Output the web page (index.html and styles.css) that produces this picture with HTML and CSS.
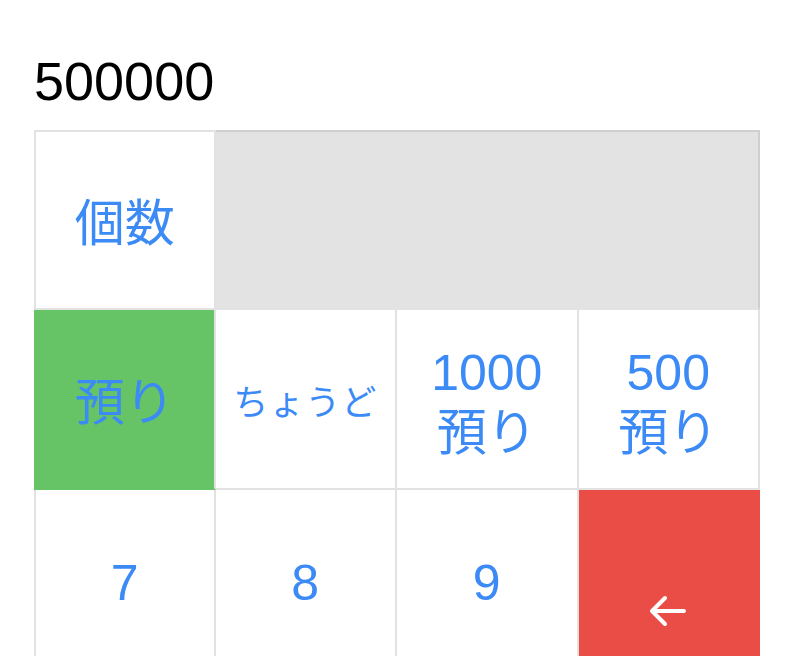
FILE: index.html
```html
<!DOCTYPE html>
<html lang="ja">
<head>
    <meta charset="UTF-8" />
    <meta name="viewport" content="width=device-width, initial-scale=1.0">
    <title>レジ</title>
    <link rel="stylesheet" href="styles.css">
</head>
<body>
<div class="register">
    <div class="amount">500000</div>
    <div class="keypad">
        <div class="key first-col first-row">個数</div>
        <div class="display first-row"></div>

        <div class="key first-col key-deposit">預り</div>
        <div class="key key-small">ちょうど</div>
        <div class="key">1000<br>預り</div>
        <div class="key">500<br>預り</div>

        <div class="key first-col">7</div>
        <div class="key">8</div>
        <div class="key">9</div>
        <div class="key key-back">
            <svg class="back-icon" width="38" height="32" viewBox="0 0 38 32">
                <path d="M35 16H4M16 3L3 16l13 13" fill="none" stroke="#fff" stroke-width="4" stroke-linecap="round" stroke-linejoin="round"/>
            </svg>
        </div>
    </div>
</div>
</body>
</html>
```

FILE: styles.css
```css
* {
    box-sizing: border-box;
    margin: 0;
    padding: 0;
}
html, body {
    background: #fff;
    overflow: hidden;
}
body {
    font-family: "Liberation Sans", "Noto Sans CJK JP", sans-serif;
}
.register {
    padding: 51px 44px 0 34px;
}
.amount {
    font-size: 54px;
    line-height: 60px;
    color: #000;
    margin-bottom: 19px;
}
.keypad {
    display: grid;
    grid-template-columns: repeat(4, 1fr);
    grid-auto-rows: 180px;
}
.keypad > div {
    border-right: 2px solid #e2e2e2;
    border-bottom: 2px solid #e2e2e2;
}
.keypad > .first-col {
    border-left: 2px solid #e2e2e2;
}
.keypad > .first-row {
    border-top: 2px solid #e2e2e2;
}
.key {
    display: flex;
    align-items: center;
    justify-content: center;
    text-align: center;
    padding-top: 7px;
    font-size: 50px;
    line-height: 60px;
    color: #3b8af5;
    background: #fff;
}
.keypad > .display {
    grid-column: span 3;
    background: #e3e3e3;
    border-top-color: #cfcfcf;
    border-right-color: #cfcfcf;
    border-bottom-color: #e3e3e3;
}
.keypad > .key-deposit {
    background: #66c466;
    border-left-color: #66c466;
    border-bottom-color: #66c466;
}
.key-small {
    font-size: 35px;
    letter-spacing: 1px;
}
.keypad > .key-back {
    background: #e94d46;
    border-right-color: #e94d46;
}
.back-icon {
    margin-top: 56px;
}
```
